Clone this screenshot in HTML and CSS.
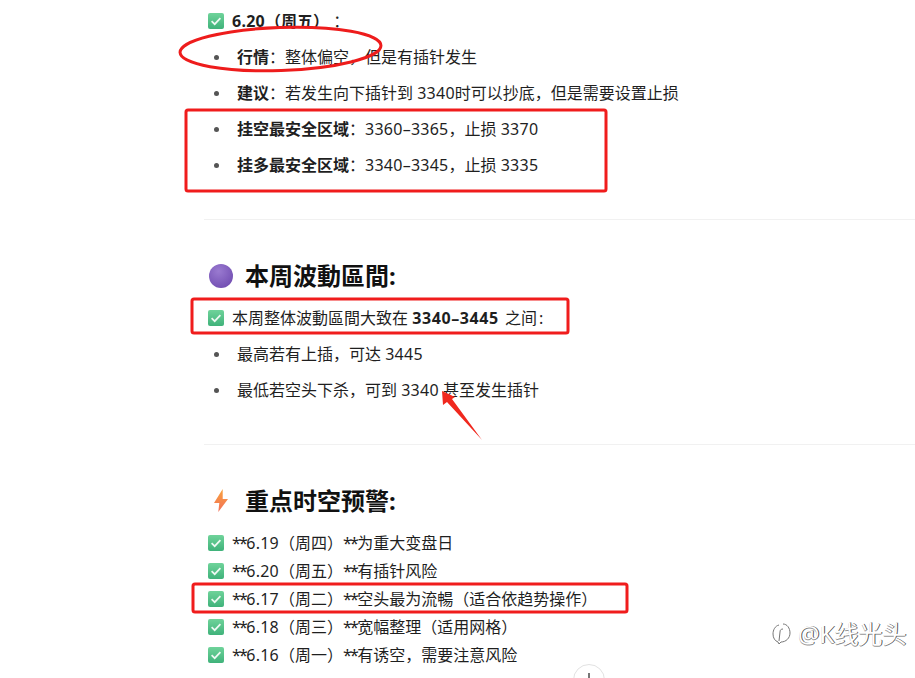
FILE: index.html
```html
<!DOCTYPE html>
<html lang="zh">
<head>
<meta charset="utf-8">
<title>本周波動區間</title>
<link rel="stylesheet" href="styles.css">
</head>
<body>
<svg width="0" height="0" class="defs">
  <defs>
    <linearGradient id="chk" x1="0" y1="0" x2="0" y2="1"><stop offset="0" stop-color="#6fd39a"/><stop offset="1" stop-color="#3fb27a"/></linearGradient>
    <radialGradient id="orb" cx="0.4" cy="0.3" r="0.8"><stop offset="0" stop-color="#9a7ad0"/><stop offset="1" stop-color="#6f4bb0"/></radialGradient>
    <linearGradient id="bolt" x1="0" y1="0" x2="0" y2="1"><stop offset="0" stop-color="#f9a23c"/><stop offset="1" stop-color="#f2705a"/></linearGradient>
    <symbol id="check" viewBox="0 0 16 16">
      <rect width="16" height="16" rx="2" fill="url(#chk)"/>
      <path d="M3.6 8.2 6.7 11.2 12.4 5.2" fill="none" stroke="#eef9f3" stroke-width="1.7"/>
    </symbol>
  </defs>
</svg>
<main class="doc">
  <p class="line first"><svg class="chk"><use href="#check"/></svg><span><b><span class="n">6.20</span>（周五）</b> ：</span></p>
  <ul class="list">
    <li><span><b>行情</b>：整体偏空，但是有插针发生</span></li>
    <li><span><b>建议</b>：若发生向下插针到 <span class="n">3340</span>时可以抄底，但是需要设置止损</span></li>
    <li><span><b>挂空最安全区域</b>：<span class="n">3360–3365</span>，止损 <span class="n">3370</span></span></li>
    <li><span><b>挂多最安全区域</b>：<span class="n">3340–3345</span>，止损 <span class="n">3335</span></span></li>
  </ul>
  <hr class="rule">
  <h2 class="head"><svg class="orb" viewBox="0 0 24 24"><circle cx="12" cy="12" r="12" fill="url(#orb)"/></svg><span>本周波動區間:</span></h2>
  <p class="line"><svg class="chk"><use href="#check"/></svg><span>本周整体波動區間大致在 <b class="range">3340–3445</b> 之间<span class="colon">:</span></span></p>
  <ul class="list">
    <li><span>最高若有上插，可达 <span class="n">3445</span></span></li>
    <li><span>最低若空头下杀，可到 <span class="n">3340</span> 甚至发生插针</span></li>
  </ul>
  <hr class="rule">
  <h2 class="head"><svg class="orb" viewBox="0 0 24 24"><path d="M13.700 0 5 14h5.300L9.300 23 19 10h-5.300z" fill="url(#bolt)"/></svg><span>重点时空预警:</span></h2>
  <div class="checks">
    <p class="line"><svg class="chk"><use href="#check"/></svg><span><span class="st">**</span><span class="n">6.19</span>（周四）<span class="st">**</span>为重大变盘日</span></p>
    <p class="line"><svg class="chk"><use href="#check"/></svg><span><span class="st">**</span><span class="n">6.20</span>（周五）<span class="st">**</span>有插针风险</span></p>
    <p class="line"><svg class="chk"><use href="#check"/></svg><span><span class="st">**</span><span class="n">6.17</span>（周二）<span class="st">**</span>空头最为流暢（适合依趋势操作）</span></p>
    <p class="line"><svg class="chk"><use href="#check"/></svg><span><span class="st">**</span><span class="n">6.18</span>（周三）<span class="st">**</span>宽幅整理（适用网格）</span></p>
    <p class="line"><svg class="chk"><use href="#check"/></svg><span><span class="st">**</span><span class="n">6.16</span>（周一）<span class="st">**</span>有诱空，需要注意风险</span></p>
  </div>
</main>
<svg class="marks" viewBox="0 0 915 678">
  <ellipse cx="280.500" cy="49" rx="100.500" ry="21.500" transform="rotate(-2 280 49)" fill="none" stroke="#ee1c1c" stroke-width="3"/>
  <rect x="186" y="110" width="420" height="81" rx="2" fill="none" stroke="#f01c1c" stroke-width="3"/>
  <rect x="192" y="299" width="376" height="34" rx="2" fill="none" stroke="#f01c1c" stroke-width="3"/>
  <rect x="193" y="584" width="434" height="28" rx="2" fill="none" stroke="#f01c1c" stroke-width="3"/>
  <path d="M442 391 443 405 447 402 482 440 452 399 455 397z" fill="#f0281e"/>
</svg>
<div class="mark"><svg class="zh" viewBox="0 0 20 24"><path d="M7 3C3 4 1 8 1 12c0 4 2 7 5 8l1 2 2-2c5 0 9-4 9-9 0-5-3-9-7-9M11 7c-2 0-3 1-3 3l-1 9" fill="none" stroke="#777" stroke-width="1"/></svg><span>@K线光头</span></div>
<div class="plus"></div>
</body>
</html>
```
FILE: styles.css
```css
* { box-sizing: border-box; }
html, body { margin: 0; padding: 0; height: 678px; overflow: hidden; background: #fff; }
body {
  position: relative;
  font-family: "Noto Sans", "Noto Sans CJK SC", sans-serif;
  font-size: 16px;
  color: #1f1f1f;
}
.defs { position: absolute; }
.doc { margin-left: 204px; padding-top: 7px; }
.line { display: flex; align-items: center; gap: 8px; height: 28px; margin: 0; padding-left: 4px; white-space: pre; }
.line > span { position: relative; top: -1px; }
.n { letter-spacing: .25px; }
.range { letter-spacing: .6px; margin-right: 2px; }
.colon { margin-left: 2px; }
.st { letter-spacing: -1.7px; }
.chk { flex: none; width: 16px; height: 16px; }
.list { list-style: none; margin: 4px 0 0; padding: 0 0 0 33px; }
.list li { position: relative; display: flex; align-items: center; height: 36px; white-space: pre; }
.list li > span { position: relative; top: -1px; }
.list li::before {
  content: "";
  position: absolute;
  left: -23px;
  top: 16px;
  width: 5px;
  height: 5px;
  border-radius: 50%;
  background: #555;
}
.rule { height: 1px; margin: 36px 0 0; border: 0; background: #f1f1f1; }
.head {
  display: flex;
  align-items: center;
  gap: 12px;
  height: 36px;
  margin: 38px 0 0;
  padding-left: 5px;
  font-size: 24px;
  font-weight: 700;
  color: #111;
}
.head > span { position: relative; top: -2px; }
.orb { flex: none; width: 24px; height: 24px; }
.head + .line { margin-top: 10px; }
.checks { margin-top: 10px; }
.marks { position: absolute; left: 0; top: 0; width: 915px; height: 678px; pointer-events: none; }
.mark {
  position: absolute;
  left: 772px;
  top: 618px;
  display: flex;
  align-items: center;
  gap: 6px;
  font-size: 24px;
  line-height: 32px;
  color: #fff;
  text-shadow: 1px 0 0 #555, 0 1px 0 #999;
}
.zh { width: 20px; height: 24px; }
.plus {
  position: absolute;
  left: 573px;
  top: 664px;
  width: 32px;
  height: 32px;
  border: 1px solid #e2e2e2;
  border-radius: 50%;
  background: #fff;
}
.plus::before {
  content: "";
  position: absolute;
  left: 14px;
  top: 8px;
  width: 2px;
  height: 14px;
  background: #777;
}
```
